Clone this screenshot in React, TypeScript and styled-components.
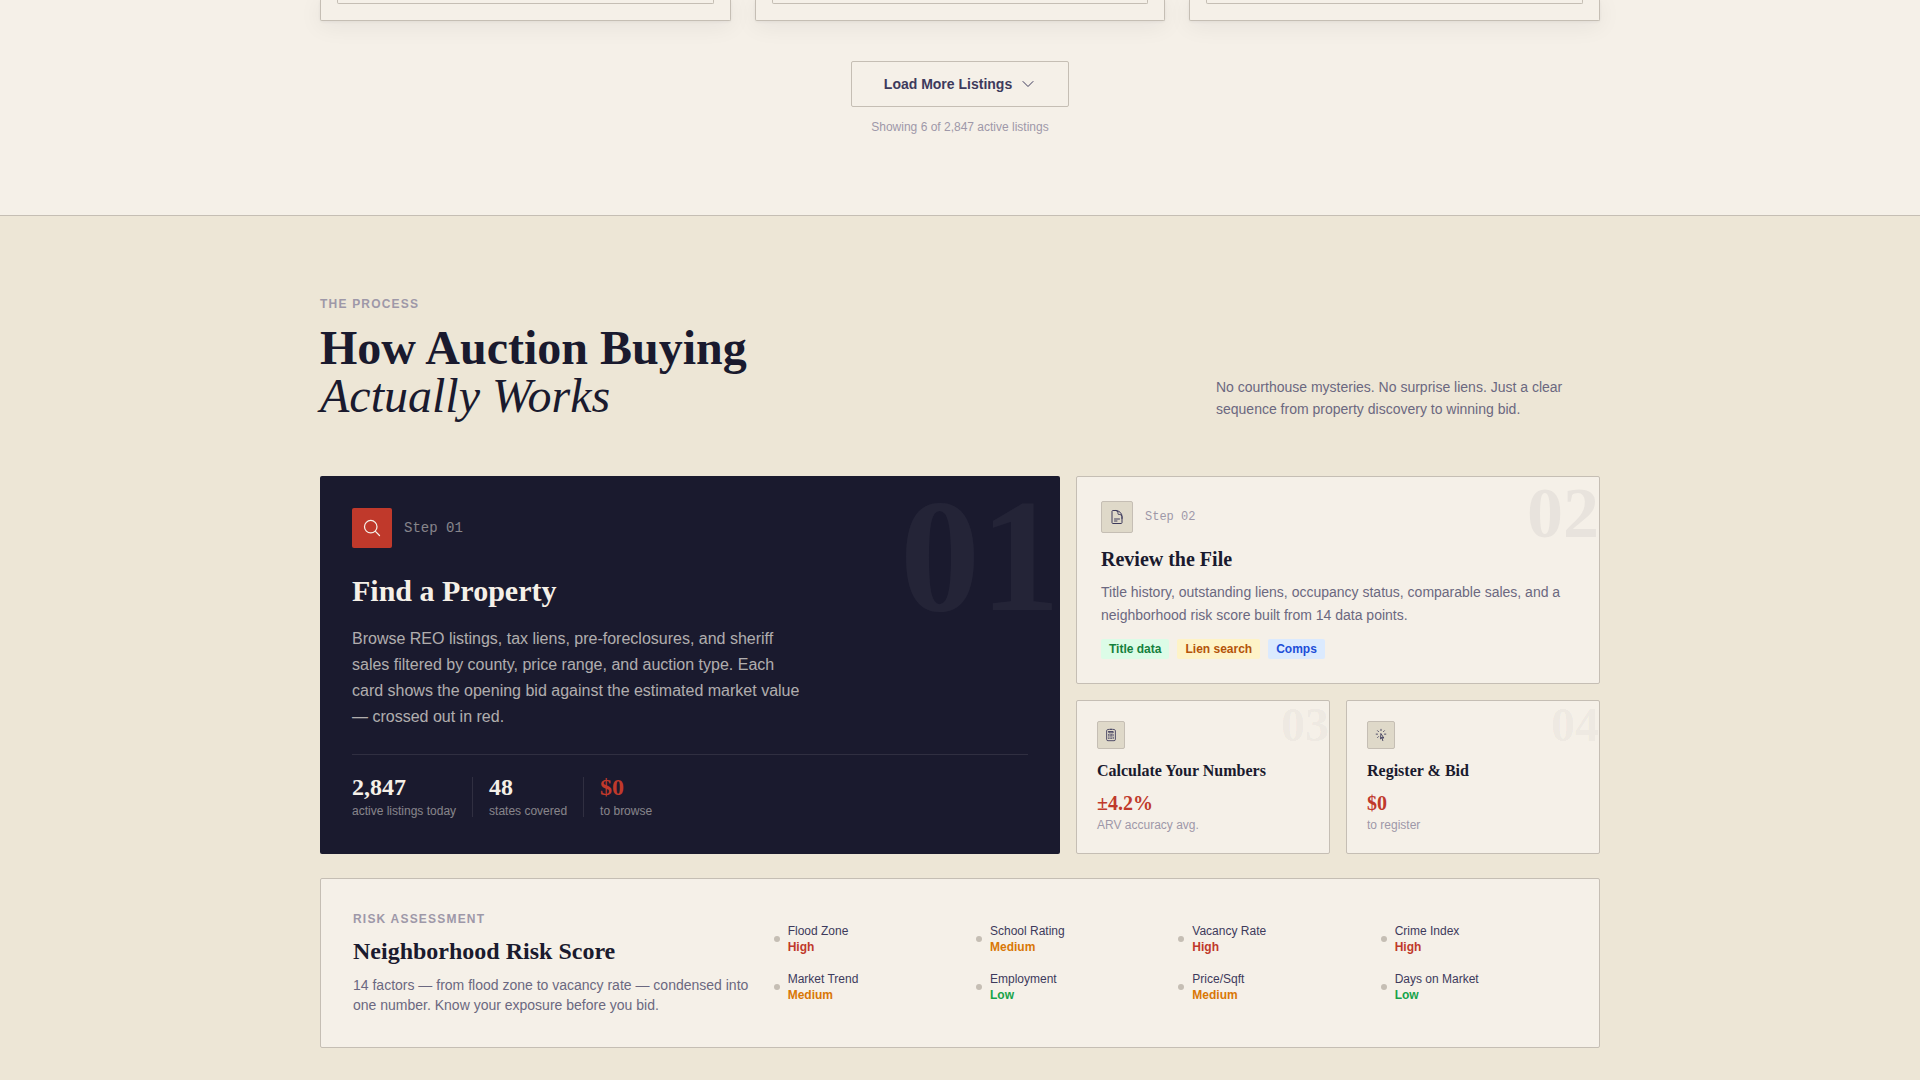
import React from "react";
import styled, { createGlobalStyle } from "styled-components";
import {
  HiOutlineCalculator,
  HiOutlineChevronDown,
  HiOutlineCursorArrowRays,
  HiOutlineDocumentText,
  HiOutlineMagnifyingGlass,
} from "react-icons/hi2";

const color = {
  paper: "#f5f0e8",
  sand: "#ede6d6",
  stone: "#dfd9c9",
  line: "#c5beb4",
  ink: "#1a1a2e",
  inkSoft: "#3d3a5c",
  muted: "#6b6880",
  faint: "#9e98a8",
  red: "#c0392b",
};

const font = {
  sans: '"Liberation Sans", Arial, sans-serif',
  serif: '"Liberation Serif", "Times New Roman", serif',
  mono: '"Liberation Mono", "Courier New", monospace',
};

const GlobalStyle = createGlobalStyle`
  *, *::before, *::after { box-sizing: border-box; }
  body {
    margin: 0;
    background: ${color.sand};
    color: ${color.ink};
    font-family: ${font.sans};
    font-size: 14px;
    line-height: 20px;
  }
  h2, h3, p, ul { margin: 0; padding: 0; }
`;

const Container = styled.div`
  max-width: 1280px;
  margin: 0 auto;
`;

/* Listings */

const Listings = styled.section`
  background: ${color.paper};
  padding-bottom: 80px;
`;

const ListingGrid = styled.div`
  display: grid;
  grid-template-columns: repeat(3, 1fr);
  gap: 24px;
`;

const ListingCard = styled.article`
  padding: 0 16px 16px;
  background: ${color.paper};
  border: 1px solid ${color.line};
  border-top: 0;
  border-radius: 0 0 2px 2px;
  box-shadow: 0 1px 3px rgba(26, 26, 46, 0.06), 0 4px 24px rgba(26, 26, 46, 0.07);
`;

const ListingFooter = styled.div`
  height: 4px;
  border: 1px solid ${color.line};
  border-top: 0;
  border-radius: 0 0 2px 2px;
`;

const LoadMore = styled.div`
  display: flex;
  flex-direction: column;
  align-items: center;
  gap: 12px;
  margin-top: 40px;
`;

const LoadButton = styled.button`
  display: flex;
  align-items: center;
  gap: 8px;
  padding: 12px 32px;
  background: transparent;
  border: 1px solid ${color.line};
  border-radius: 2px;
  color: ${color.inkSoft};
  font: 600 14px/20px ${font.sans};
  cursor: pointer;
`;

const Caption = styled.p`
  color: ${color.faint};
  font-size: 12px;
  line-height: 16px;
`;

/* Process */

const Process = styled.section`
  background: ${color.sand};
  border-top: 1px solid ${color.line};
  padding: 80px 0 32px;
`;

const SectionHeader = styled.header`
  display: flex;
  align-items: flex-end;
  justify-content: space-between;
  margin-bottom: 56px;
`;

const Eyebrow = styled.p`
  color: ${color.faint};
  font-size: 12px;
  font-weight: 600;
  line-height: 16px;
  letter-spacing: 0.1em;
  text-transform: uppercase;
`;

const Heading = styled.h2`
  margin-top: 12px;
  font: 700 48px/48px ${font.serif};

  em {
    display: block;
    font-weight: 400;
  }
`;

const Intro = styled.p`
  width: 384px;
  color: ${color.muted};
  line-height: 22px;
`;

const StepGrid = styled.div`
  display: grid;
  grid-template-columns: repeat(12, 1fr);
  gap: 16px;
`;

const SidePanel = styled.div`
  grid-column: span 5;
  display: grid;
  grid-template-columns: 1fr 1fr;
  gap: 16px;
`;

const Card = styled.article<{ $pad: number; $wide?: boolean }>`
  position: relative;
  padding: ${(p) => p.$pad}px;
  background: ${color.paper};
  border: 1px solid ${color.line};
  border-radius: 2px;
  grid-column: ${(p) => (p.$wide ? "1 / -1" : "auto")};
`;

const LeadCard = styled.article`
  grid-column: span 7;
  position: relative;
  padding: 32px;
  background: ${color.ink};
  border-radius: 2px;
  color: ${color.paper};
`;

const Watermark = styled.span<{ $size: number; $tint: string }>`
  position: absolute;
  top: 0;
  right: 0;
  color: ${(p) => p.$tint};
  font-family: ${font.serif};
  font-size: ${(p) => p.$size}px;
  font-weight: 700;
  line-height: 1;
  user-select: none;
`;

const StepHead = styled.div<{ $gap: number }>`
  display: flex;
  align-items: center;
  gap: 12px;
  margin-bottom: ${(p) => p.$gap}px;
`;

const IconBox = styled.span<{ $size: number; $lead?: boolean }>`
  display: flex;
  align-items: center;
  justify-content: center;
  width: ${(p) => p.$size}px;
  height: ${(p) => p.$size}px;
  border-radius: 2px;
  background: ${(p) => (p.$lead ? color.red : color.stone)};
  border: ${(p) => (p.$lead ? "0" : `1px solid ${color.line}`)};
  color: ${(p) => (p.$lead ? color.paper : color.inkSoft)};
`;

const StepLabel = styled.span<{ $size: number; $lead?: boolean }>`
  color: ${(p) => (p.$lead ? "rgba(245, 240, 232, 0.5)" : color.faint)};
  font-family: ${font.mono};
  font-size: ${(p) => p.$size}px;
`;

const LeadTitle = styled.h3`
  margin-bottom: 16px;
  font: 700 30px/38px ${font.serif};
`;

const LeadText = styled.p`
  max-width: 448px;
  margin-bottom: 24px;
  color: rgba(245, 240, 232, 0.7);
  font-size: 16px;
  line-height: 26px;
`;

const Stats = styled.div`
  display: flex;
  align-items: center;
  gap: 16px;
  padding-top: 20px;
  border-top: 1px solid rgba(245, 240, 232, 0.1);
`;

const StatRule = styled.span`
  width: 1px;
  height: 40px;
  background: rgba(245, 240, 232, 0.1);
`;

const StatValue = styled.p<{ $accent?: boolean }>`
  margin-bottom: 4px;
  color: ${(p) => (p.$accent ? color.red : color.paper)};
  font: 700 24px/24px ${font.serif};
`;

const StatLabel = styled.p`
  color: rgba(245, 240, 232, 0.5);
  font-size: 12px;
  line-height: 16px;
`;

const CardTitle = styled.h3`
  margin-bottom: 8px;
  font: 700 20px/28px ${font.serif};
`;

const CardText = styled.p`
  margin-bottom: 12px;
  color: ${color.muted};
  line-height: 23px;
`;

const Tags = styled.ul`
  display: flex;
  gap: 8px;
  list-style: none;
`;

const Tag = styled.li<{ $bg: string; $fg: string }>`
  padding: 2px 8px;
  border-radius: 2px;
  background: ${(p) => p.$bg};
  color: ${(p) => p.$fg};
  font-size: 12px;
  font-weight: 600;
  line-height: 16px;
`;

const SmallTitle = styled.h3`
  margin-bottom: 8px;
  font: 700 16px/20px ${font.serif};
`;

const SmallValue = styled.p`
  color: ${color.red};
  font: 700 20px/28px ${font.serif};
`;

/* Risk assessment */

const RiskCard = styled.article`
  display: grid;
  grid-template-columns: 1fr 2fr;
  align-items: center;
  gap: 24px;
  margin-top: 24px;
  padding: 32px;
  background: ${color.paper};
  border: 1px solid ${color.line};
  border-radius: 2px;
`;

const RiskTitle = styled.h3`
  margin: 8px 0;
  font: 700 24px/32px ${font.serif};
`;

const RiskText = styled.p`
  color: ${color.muted};
`;

const Factors = styled.ul`
  display: grid;
  grid-template-columns: repeat(4, 1fr);
  gap: 16px;
  list-style: none;
`;

const Factor = styled.li`
  display: flex;
  align-items: center;
  gap: 8px;
  font-size: 12px;
  line-height: 16px;

  &::before {
    content: "";
    width: 6px;
    height: 6px;
    border-radius: 50%;
    background: ${color.line};
  }
`;

const FactorName = styled.p`
  color: ${color.inkSoft};
`;

const levelColor = { High: "#c0392b", Medium: "#d97706", Low: "#16a34a" };
type Level = keyof typeof levelColor;

const FactorLevel = styled.p<{ $level: Level }>`
  color: ${(p) => levelColor[p.$level]};
  font-weight: 600;
`;

const factors: { name: string; level: Level }[] = [
  { name: "Flood Zone", level: "High" },
  { name: "School Rating", level: "Medium" },
  { name: "Vacancy Rate", level: "High" },
  { name: "Crime Index", level: "High" },
  { name: "Market Trend", level: "Medium" },
  { name: "Employment", level: "Low" },
  { name: "Price/Sqft", level: "Medium" },
  { name: "Days on Market", level: "Low" },
];

const stats = [
  { value: "2,847", label: "active listings today" },
  { value: "48", label: "states covered" },
  { value: "$0", label: "to browse", accent: true },
];

const smallSteps = [
  { number: "03", title: "Calculate Your Numbers", value: "±4.2%", label: "ARV accuracy avg.", Icon: HiOutlineCalculator },
  { number: "04", title: "Register & Bid", value: "$0", label: "to register", Icon: HiOutlineCursorArrowRays },
];

export default function App() {
  return (
    <>
      <GlobalStyle />
      <main>
        <Listings>
          <Container>
            <ListingGrid>
              {[0, 1, 2].map((i) => (
                <ListingCard key={i}>
                  <ListingFooter />
                </ListingCard>
              ))}
            </ListingGrid>
            <LoadMore>
              <LoadButton type="button">
                Load More Listings
                <HiOutlineChevronDown size={16} aria-hidden />
              </LoadButton>
              <Caption>Showing 6 of 2,847 active listings</Caption>
            </LoadMore>
          </Container>
        </Listings>

        <Process>
          <Container>
            <SectionHeader>
              <div>
                <Eyebrow>The Process</Eyebrow>
                <Heading>
                  How Auction Buying <em>Actually Works</em>
                </Heading>
              </div>
              <Intro>
                No courthouse mysteries. No surprise liens. Just a clear sequence from property
                discovery to winning bid.
              </Intro>
            </SectionHeader>

            <StepGrid>
              <LeadCard>
                <Watermark $size={160} $tint="rgba(245, 240, 232, 0.05)" aria-hidden>
                  01
                </Watermark>
                <StepHead $gap={24}>
                  <IconBox $size={40} $lead>
                    <HiOutlineMagnifyingGlass size={20} aria-hidden />
                  </IconBox>
                  <StepLabel $size={14} $lead>
                    Step 01
                  </StepLabel>
                </StepHead>
                <LeadTitle>Find a Property</LeadTitle>
                <LeadText>
                  Browse REO listings, tax liens, pre-foreclosures, and sheriff sales filtered by
                  county, price range, and auction type. Each card shows the opening bid against
                  the estimated market value — crossed out in red.
                </LeadText>
                <Stats>
                  {stats.map((s, i) => (
                    <React.Fragment key={s.label}>
                      {i > 0 && <StatRule />}
                      <div>
                        <StatValue $accent={s.accent}>{s.value}</StatValue>
                        <StatLabel>{s.label}</StatLabel>
                      </div>
                    </React.Fragment>
                  ))}
                </Stats>
              </LeadCard>

              <SidePanel>
                <Card $pad={24} $wide>
                  <Watermark $size={72} $tint="rgba(26, 26, 46, 0.06)" aria-hidden>
                    02
                  </Watermark>
                  <StepHead $gap={12}>
                    <IconBox $size={32}>
                      <HiOutlineDocumentText size={16} aria-hidden />
                    </IconBox>
                    <StepLabel $size={12}>Step 02</StepLabel>
                  </StepHead>
                  <CardTitle>Review the File</CardTitle>
                  <CardText>
                    Title history, outstanding liens, occupancy status, comparable sales, and a
                    neighborhood risk score built from 14 data points.
                  </CardText>
                  <Tags>
                    <Tag $bg="#dcfce7" $fg="#15803d">Title data</Tag>
                    <Tag $bg="#fef3c7" $fg="#b45309">Lien search</Tag>
                    <Tag $bg="#dbeafe" $fg="#1d4ed8">Comps</Tag>
                  </Tags>
                </Card>
                {smallSteps.map(({ number, title, value, label, Icon }) => (
                  <Card key={number} $pad={20}>
                    <Watermark $size={48} $tint="rgba(26, 26, 46, 0.05)" aria-hidden>
                      {number}
                    </Watermark>
                    <StepHead $gap={12}>
                      <IconBox $size={28}>
                        <Icon size={14} aria-hidden />
                      </IconBox>
                    </StepHead>
                    <SmallTitle>{title}</SmallTitle>
                    <SmallValue>{value}</SmallValue>
                    <Caption>{label}</Caption>
                  </Card>
                ))}
              </SidePanel>
            </StepGrid>

            <RiskCard>
              <div>
                <Eyebrow>Risk Assessment</Eyebrow>
                <RiskTitle>Neighborhood Risk Score</RiskTitle>
                <RiskText>
                  14 factors — from flood zone to vacancy rate — condensed into one number. Know
                  your exposure before you bid.
                </RiskText>
              </div>
              <Factors>
                {factors.map((f) => (
                  <Factor key={f.name}>
                    <div>
                      <FactorName>{f.name}</FactorName>
                      <FactorLevel $level={f.level}>{f.level}</FactorLevel>
                    </div>
                  </Factor>
                ))}
              </Factors>
            </RiskCard>
          </Container>
        </Process>
      </main>
    </>
  );
}
